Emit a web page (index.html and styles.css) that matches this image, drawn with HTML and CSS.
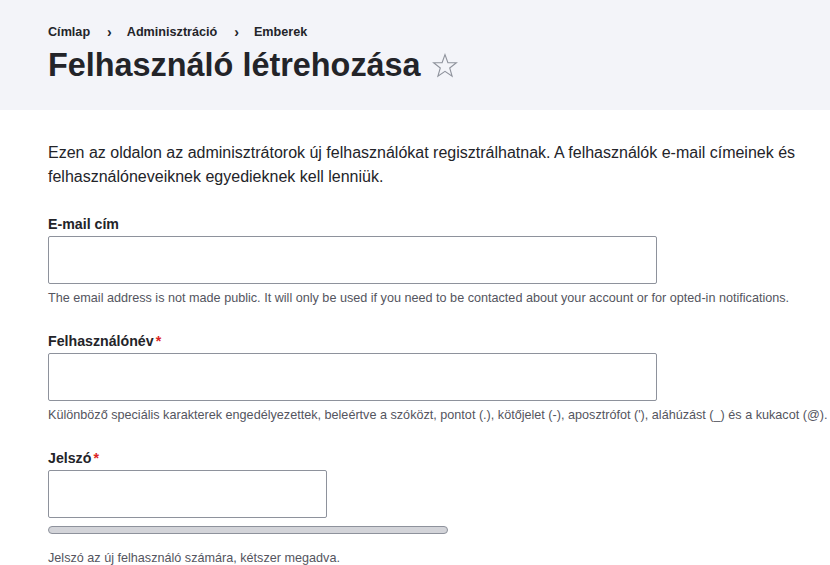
FILE: index.html
```html
<!DOCTYPE html>
<html lang="hu">
<head>
<meta charset="utf-8">
<title>Felhasználó létrehozása</title>
<link rel="stylesheet" href="styles.css">
</head>
<body>
<header class="page-header">
  <nav class="breadcrumb">
    <a class="crumb" href="#">Címlap</a>
    <span class="sep">›</span>
    <a class="crumb" href="#">Adminisztráció</a>
    <span class="sep">›</span>
    <a class="crumb" href="#">Emberek</a>
  </nav>
  <div class="title-row">
    <h1 class="page-title">Felhasználó létrehozása</h1>
    <svg class="star" width="26" height="25" viewBox="0 0 26 25" aria-hidden="true">
      <path d="M13 1.6 L15.9 9.6 L24.4 9.8 L17.7 15 L20.1 23.2 L13 18.4 L5.9 23.2 L8.3 15 L1.6 9.8 L10.1 9.6 Z" fill="none" stroke="#8e929c" stroke-width="1.1" stroke-linejoin="miter"/>
    </svg>
  </div>
</header>
<main class="content">
  <p class="intro">Ezen az oldalon az adminisztrátorok új felhasználókat regisztrálhatnak. A felhasználók e-mail címeinek és felhasználóneveiknek egyedieknek kell lenniük.</p>

  <div class="form-item">
    <label class="label">E-mail cím</label>
    <input class="input wide" type="email">
    <div class="desc nowrap">The email address is not made public. It will only be used if you need to be contacted about your account or for opted-in notifications.</div>
  </div>

  <div class="form-item">
    <label class="label">Felhasználónév<span class="req">*</span></label>
    <input class="input wide" type="text">
    <div class="desc nowrap">Különböző speciális karakterek engedélyezettek, beleértve a szóközt, pontot (.), kötőjelet (-), aposztrófot ('), aláhúzást (_) és a kukacot (@).</div>
  </div>

  <div class="form-item">
    <label class="label">Jelszó<span class="req">*</span></label>
    <input class="input narrow" type="password">
    <div class="strength"></div>
    <div class="desc desc-pass">Jelszó az új felhasználó számára, kétszer megadva.</div>
  </div>
</main>
</body>
</html>
```
FILE: styles.css
```css
html, body {
  margin: 0;
  padding: 0;
}
body {
  font-family: "Liberation Sans", Arial, sans-serif;
  color: #232429;
  background: #fff;
  overflow: hidden;
}
.page-header {
  background: #f3f4f9;
  padding: 23px 48px 25px;
  height: 62px;
}
.breadcrumb {
  display: flex;
  align-items: center;
  font-size: 12.64px;
  font-weight: bold;
  line-height: 18px;
}
.crumb {
  color: #232429;
  text-decoration: none;
}
.sep {
  margin: 0 15px 0 17px;
  font-size: 14px;
}
.title-row {
  display: flex;
  align-items: center;
  gap: 11px;
  height: 42px;
  margin-top: 3px;
}
.page-title {
  margin: 0;
  font-size: 32.4px;
  line-height: 40px;
  font-weight: bold;
}
.star {
  display: block;
  margin-top: 1px;
}
.content {
  padding: 31px 20px 0 48px;
}
.intro {
  margin: 0 0 25px;
  font-size: 16px;
  line-height: 24px;
}
.form-item {
  margin-top: 24px;
}
.label {
  display: block;
  font-size: 14.2px;
  font-weight: bold;
  line-height: 18px;
  padding-top: 1px;
  margin-bottom: 3px;
}
.req {
  color: #dc2323;
  margin-left: 2px;
}
.input {
  display: block;
  box-sizing: border-box;
  height: 48px;
  border: 1px solid #8e929c;
  border-radius: 2px;
  background: #fff;
  margin: 0;
  padding: 0 16px;
  font: inherit;
}
.wide { width: 609px; }
.narrow { width: 279px; }
.desc {
  margin-top: 6px;
  font-size: 12.64px;
  line-height: 17px;
  color: #545560;
}
.nowrap { white-space: nowrap; }
.strength {
  box-sizing: border-box;
  width: 400px;
  height: 8px;
  margin-top: 8px;
  border: 1px solid #8e929c;
  border-radius: 4px;
  background: #d3d4d9;
}
.desc-pass {
  margin-top: 16px;
}
```
